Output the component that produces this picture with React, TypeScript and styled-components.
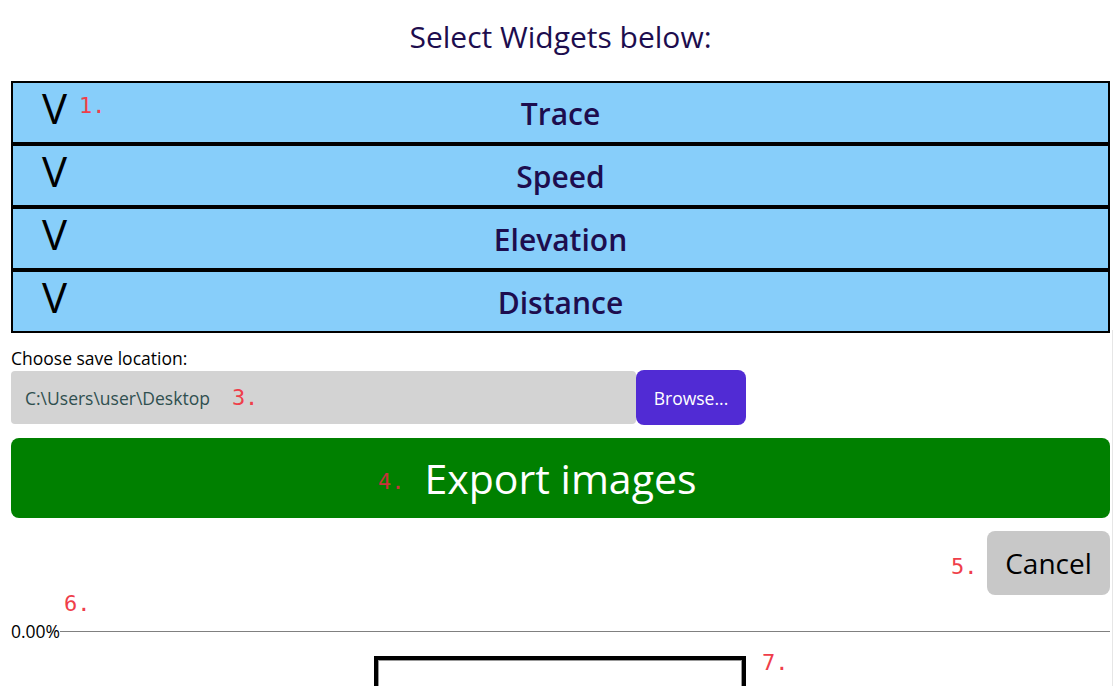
import React from "react";
import styled, { createGlobalStyle } from "styled-components";

const Global = createGlobalStyle`
  html, body { margin: 0; padding: 0; background: #fff; }
  body { font-family: "Open Sans", "Noto Sans", sans-serif; overflow: hidden; }
`;

const Page = styled.div`
  width: 1114px;
  min-height: 686px;
  box-sizing: border-box;
  padding: 0 4px 0 11px;
  display: flex;
  flex-direction: column;
  position: relative;
  & > * { flex-shrink: 0; }
`;

const Title = styled.h1`
  margin: 18px 0 0;
  height: 63px;
  text-align: center;
  font-size: 30px;
  font-weight: 400;
  line-height: 38px;
  color: #1d0d4e;
`;

const List = styled.div`
  display: flex;
  flex-direction: column;
`;

const Row = styled.div`
  height: 59px;
  border: 2px solid #000;
  background: #87cefa;
  display: grid;
  position: relative;
`;

const Chevron = styled.span`
  position: absolute;
  left: 29px;
  top: 0;
  font-size: 42px;
  line-height: 50px;
  color: #000;
`;

const RowLabel = styled.span`
  align-self: center;
  justify-self: center;
  font-size: 30px;
  font-weight: 600;
  color: #1d0d4e;
  padding-top: 2px;
`;

const Tag = styled.span<{ $dark?: boolean }>`
  font-family: "DejaVu Sans Mono", "Liberation Mono", monospace;
  font-size: 22px;
  color: ${(p) => (p.$dark ? "#c8323a" : "#ef3e4a")};
  line-height: 1;
`;

const FloatTag = styled(Tag)<{ $x: number; $y: number }>`
  position: absolute;
  left: ${(p) => p.$x}px;
  top: ${(p) => p.$y}px;
`;

const Caption = styled.div`
  margin-top: 13px;
  font-size: 17.5px;
  line-height: 24px;
  color: #000;
`;

const PathRow = styled.div`
  display: flex;
  align-items: center;
  height: 55px;
`;

const PathField = styled.div`
  width: 625px;
  height: 53px;
  box-sizing: border-box;
  background: #d3d3d3;
  border-radius: 4px;
  display: flex;
  align-items: center;
  padding-left: 14px;
  gap: 22px;
  font-size: 17.5px;
  color: #2f4f4f;
`;

const BrowseButton = styled.button`
  width: 110px;
  height: 55px;
  border: none;
  border-radius: 8px;
  background: #512bd4;
  color: #fff;
  font-family: inherit;
  font-size: 17.5px;
  padding: 0;
`;

const ExportButton = styled.button`
  margin-top: 13px;
  height: 80px;
  border: none;
  border-radius: 8px;
  background: #008000;
  color: #fff;
  font-family: inherit;
  font-size: 41px;
  display: flex;
  align-items: center;
  justify-content: center;
  padding: 0;
`;

const CancelRow = styled.div`
  margin-top: 13px;
  display: flex;
  justify-content: flex-end;
`;

const CancelButton = styled.button`
  width: 123px;
  height: 64px;
  border: none;
  border-radius: 8px;
  background: #c8c8c8;
  color: #000;
  font-family: inherit;
  font-size: 28px;
  padding: 0;
`;

const ProgressRow = styled.div`
  margin-top: 26px;
  display: flex;
  align-items: center;
  font-size: 17.5px;
  line-height: 20px;
  color: #000;
`;

const ProgressLine = styled.div`
  flex: 1;
  height: 1px;
  background: #808080;
`;

const PreviewBox = styled.div`
  margin: 15px 0 0 363px;
  width: 364px;
  height: 40px;
  border: 4px solid #000;
  outline: 1px solid #999;
  outline-offset: -5px;
  background: #fff;
`;

const Scrollbar = styled.div`
  position: absolute;
  right: 1px;
  top: 330px;
  bottom: 0;
  width: 1px;
  background: #e6e6e6;
`;

const widgets = ["Trace", "Speed", "Elevation", "Distance"];

export default function App() {
  return (
    <>
      <Global />
      <Page>
        <Title>Select Widgets below:</Title>
        <List>
          {widgets.map((w) => (
            <Row key={w}>
              <Chevron>V</Chevron>
              <RowLabel>{w}</RowLabel>
            </Row>
          ))}
        </List>
        <Caption>Choose save location:</Caption>
        <PathRow>
          <PathField>
            <span>C:\Users\user\Desktop</span>
            <Tag>3.</Tag>
          </PathField>
          <BrowseButton>Browse...</BrowseButton>
        </PathRow>
        <ExportButton>Export images</ExportButton>
        <CancelRow>
          <CancelButton>Cancel</CancelButton>
        </CancelRow>
        <ProgressRow>
          <span>0.00%</span>
          <ProgressLine />
        </ProgressRow>
        <PreviewBox />
        <FloatTag $x={79} $y={95}>1.</FloatTag>
        <FloatTag $x={378} $y={471} $dark>4.</FloatTag>
        <FloatTag $x={951} $y={556}>5.</FloatTag>
        <FloatTag $x={64} $y={593}>6.</FloatTag>
        <FloatTag $x={762} $y={652}>7.</FloatTag>
        <Scrollbar />
      </Page>
    </>
  );
}
